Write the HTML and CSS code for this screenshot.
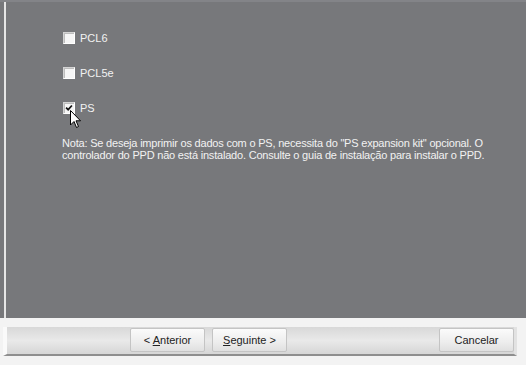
FILE: index.html
```html
<!DOCTYPE html>
<html>
<head>
<meta charset="utf-8">
<link rel="stylesheet" href="styles.css">
</head>
<body>
<div class="window">
  <div class="panel">
    <div class="content">
      <label class="opt"><span class="box"></span><span class="lbl">PCL6</span></label>
      <label class="opt"><span class="box"></span><span class="lbl">PCL5e</span></label>
      <label class="opt"><span class="box checked"><svg viewBox="0 0 12 12" width="12" height="12"><path d="M2.5 5.5 L5 8 L9.5 3" fill="none" stroke="#111" stroke-width="2"/></svg></span><span class="lbl">PS</span></label>
      <p class="note">Nota: Se deseja imprimir os dados com o PS, necessita do "PS expansion kit" opcional. O controlador do PPD não está instalado. Consulte o guia de instalação para instalar o PPD.</p>
    </div>
    <svg class="cursor" viewBox="0 0 12 19" width="12" height="19"><path d="M0.5 0.5 L0.5 15 L4 11.5 L6.5 17.5 L8.5 16.5 L6 10.8 L10.5 10.8 Z" fill="#fff" stroke="#000" stroke-width="1"/></svg>
  </div>
  <div class="footer">
    <div class="bar">
      <div class="nav">
        <button class="btn">&lt; <u>A</u>nterior</button>
        <button class="btn"><u>S</u>eguinte &gt;</button>
      </div>
      <button class="btn">Cancelar</button>
    </div>
  </div>
</div>
</body>
</html>
```

FILE: styles.css
```css
html, body {
  margin: 0;
  padding: 0;
  background: #77787b;
}
.window {
  width: 526px;
  height: 365px;
  display: flex;
  flex-direction: column;
  font-family: "Liberation Sans", Arial, sans-serif;
  font-size: 11px;
  overflow: hidden;
}
.panel {
  position: relative;
  height: 318px;
  background: #77787b;
  border-top: 2px solid #838488;
  box-sizing: border-box;
  padding-left: 4px;
}
.content {
  height: 100%;
  border-left: 2px solid #e6e6e6;
  padding: 30px 0 0 56px;
  box-sizing: border-box;
}
.opt {
  display: flex;
  align-items: center;
  height: 12px;
  margin-bottom: 23px;
  color: #f2f2f2;
}
.box {
  width: 12px;
  height: 12px;
  box-sizing: border-box;
  background: #f6f6f6;
  border: 1px solid #d4d4d4;
  border-right-color: #ffffff;
  border-bottom-color: #ffffff;
  box-shadow: inset 1px 1px 0 #bdbdbd;
  margin-left: 1px;
  display: flex;
  align-items: center;
  justify-content: center;
}
.box svg { display: block; }
.lbl {
  margin-left: 5px;
  line-height: 12px;
}
.note {
  margin: 7px 0 0 0;
  width: 444px;
  color: #f2f2f2;
  line-height: 12px;
  letter-spacing: -0.2px;
}
.cursor {
  position: absolute;
  left: 70px;
  top: 108px;
}
.footer {
  flex: 1;
  background: #f3f3f3;
  padding: 9px 0 0 3px;
  box-sizing: border-box;
  display: flex;
  flex-direction: column;
}
.bar {
  height: 26px;
  margin-right: 9px;
  border-left: 4px solid #fafafa;
  border-right: 3px solid #e2e2e2;
  border-bottom: 2px solid #8e8e8e;
  background: linear-gradient(#d8d8d8, #e9e9e9 50%, #d6d6d6);
  display: flex;
  align-items: flex-start;
  justify-content: space-between;
  padding: 1px 0 0 123px;
}
.nav {
  display: flex;
  gap: 7px;
}
.btn {
  width: 75px;
  height: 24px;
  font-family: "Liberation Sans", Arial, sans-serif;
  font-size: 11px;
  color: #222;
  background: linear-gradient(#fbfbfb, #ededed 60%, #e0e0e0);
  border: 1px solid #c4c4c4;
  border-radius: 2px;
  padding: 0;
}
.btn u { text-decoration: underline; }
```
